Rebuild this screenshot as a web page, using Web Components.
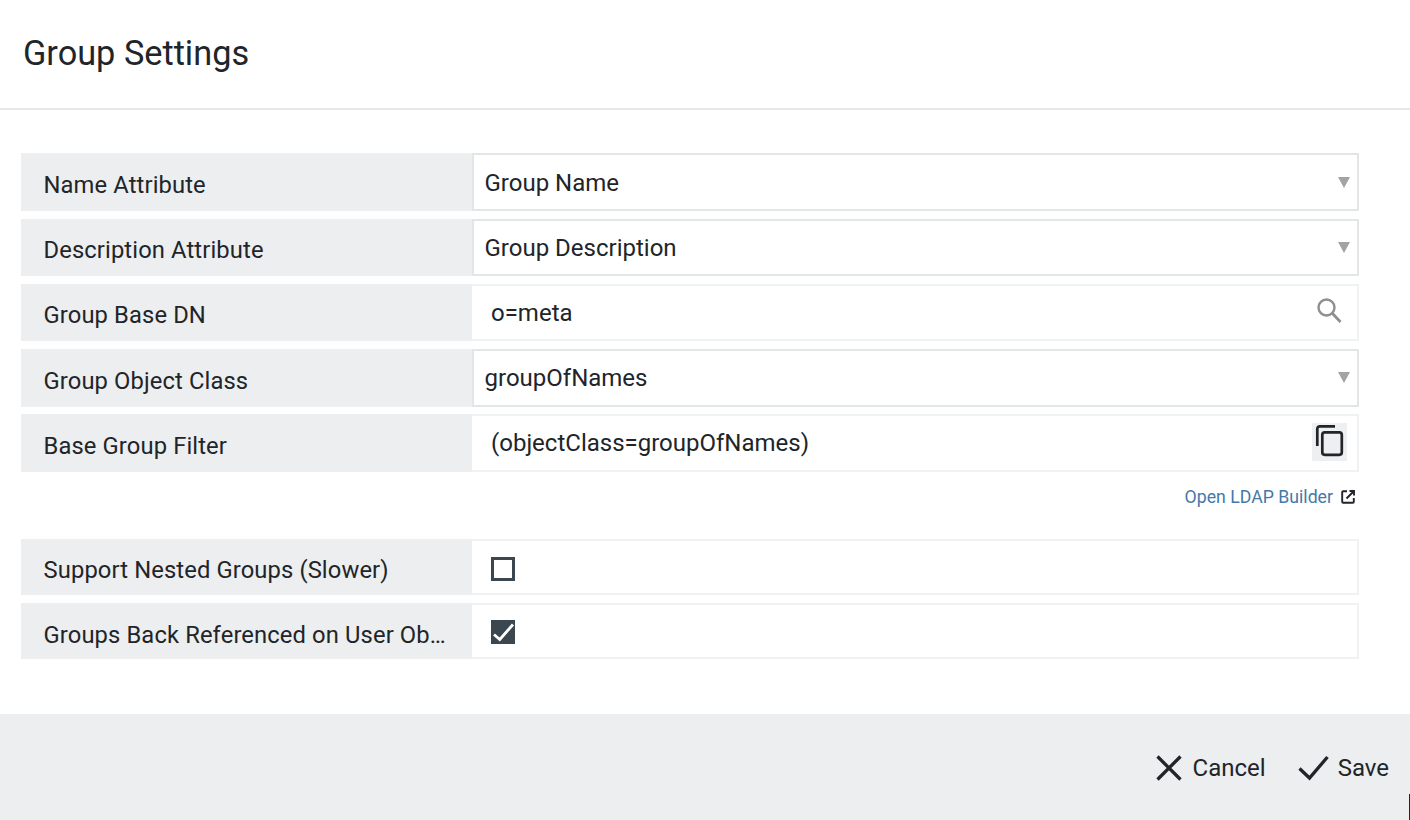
<!DOCTYPE html>
<html><head><meta charset="utf-8"><style>
html,body{margin:0;padding:0;background:#fff}
body{font-family:Roboto,"Liberation Sans",sans-serif;color:#212529;width:1410px;height:820px;overflow:hidden;position:relative}
</style></head><body>
<settings-dialog>
<span slot="title">Group Settings</span>
<form-row label="Name Attribute" kind="select" value="Group Name"></form-row>
<form-row label="Description Attribute" kind="select" value="Group Description"></form-row>
<form-row label="Group Base DN" kind="search" value="o=meta"></form-row>
<form-row label="Group Object Class" kind="select" value="groupOfNames"></form-row>
<form-row label="Base Group Filter" kind="copy" value="(objectClass=groupOfNames)"></form-row>
<ldap-link></ldap-link>
<form-row label="Support Nested Groups (Slower)" kind="check"></form-row>
<form-row label="Groups Back Referenced on User Ob…" kind="check" checked></form-row>
<action-button slot="actions" icon="x">Cancel</action-button>
<action-button slot="actions" icon="check">Save</action-button>
</settings-dialog>
<script>
class SettingsDialog extends HTMLElement{constructor(){super();this.attachShadow({mode:'open'}).innerHTML=`<style>
:host{display:flex;flex-direction:column;height:820px}
header{height:106px;padding-bottom:2px;border-bottom:2px solid #e6e9ea;padding-left:23px;display:flex;align-items:center;font-size:34.3px;color:#212529}
main{flex:1;padding:43.3px 51px 0 21px;display:flex;flex-direction:column;gap:7.75px}
footer{height:106px;background:#eceef0;display:flex;justify-content:flex-end;align-items:center;gap:32px;padding:0 21px 0 0}
</style><header><slot name="title"></slot></header><main><slot></slot></main><footer><slot name="actions"></slot></footer>`}}
customElements.define('settings-dialog',SettingsDialog);

const ICONS={
search:`<svg width="28" height="28" viewBox="0 0 28 28" fill="none" stroke="#8f8f8f"><circle cx="11.500" cy="11.500" r="8" stroke-width="2.400"/><path d="M17.500 17.500l8 8.500" stroke-width="2.800"/></svg>`,
copy:`<svg width="35" height="38" viewBox="0 0 35 38" fill="none" stroke="#212529" stroke-width="2.700"><path d="M5.300 23V5.800a2.500 2.500 0 0 1 2.500-2.500H23"/><rect x="10.300" y="9.300" width="19.500" height="22.500" rx="2.500"/></svg>`
};
class FormRow extends HTMLElement{constructor(){super();this.attachShadow({mode:'open'})}
connectedCallback(){const k=this.getAttribute('kind'),v=this.getAttribute('value')||'',ch=this.hasAttribute('checked');
let inner='';
if(k==='select')inner=`<div class="sel"><span>${v}</span><i class="arrow"></i></div>`;
if(k==='search'||k==='copy')inner=`<div class="inp ${k}"><span>${v}</span>${k==='search'?`<b class="ic s">${ICONS.search}</b>`:`<b class="ic c">${ICONS.copy}</b>`}</div>`;
if(k==='check')inner=`<div class="inp chk"><i class="cb ${ch?'on':''}">${ch?'<svg width="24" height="24" viewBox="0 0 24 24" fill="none" stroke="#fff" stroke-width="2.800"><path d="M3 14.500l5.800 5L22 4.500"/></svg>':''}</i></div>`;
this.shadowRoot.innerHTML=`<style>
:host{display:grid;grid-template-columns:451px 887px;height:57.5px;font-size:24px;color:#212529}
:host([kind=check]){height:56px}
.lab{background:#eceef0;display:flex;align-items:center;padding:5.500px 0 0 22.500px;min-width:0;font-size:23.75px;letter-spacing:.12px}
:host([kind=check]) .lab{padding-top:6px}
:host([checked]) .lab{padding-top:9px}
.lab span{white-space:nowrap;display:block;line-height:30px}
.sel,.inp{box-sizing:border-box;display:flex;align-items:center;justify-content:space-between;height:100%;background:#fff}
.sel{border:2px solid #e3e6e7;padding:1px 7px 0 10.500px}
.inp{border:2px solid #f0f1f2;border-left:0;padding:0 11px 0 19px}
.inp.copy{padding-right:10px}
.inp.chk{padding-top:3px;padding-bottom:0}
.arrow{width:0;height:0;border-left:6.500px solid transparent;border-right:6.500px solid transparent;border-top:11px solid #a3a3a3;margin-bottom:1px}
.ic{display:flex;align-items:center;justify-content:center}
.s{margin:0 3px 5.500px 0}
.c{width:35px;height:38px;background:#eeeff0;margin-bottom:2px}
.cb{box-sizing:border-box;width:24px;height:24px;border:3.500px solid #3a4750;display:block}
.cb.on{background:#3a4750;border:0}
.cb svg{display:block}
</style><div class="lab"><span>${this.getAttribute('label')}</span></div>${inner}`}}
customElements.define('form-row',FormRow);

class LdapLink extends HTMLElement{constructor(){super();this.attachShadow({mode:'open'}).innerHTML=`<style>
:host{display:flex;justify-content:flex-end;align-items:center;gap:8px;width:1338px;height:45px;margin:-7.750px 0 14.700px 0;padding:6px 4px 0 0;box-sizing:border-box;font-size:17.700px;color:#4578a8}
svg{display:block}
</style><span>Open LDAP Builder</span><svg width="14" height="14" viewBox="0 0 14 14" fill="none" stroke="#212529" stroke-width="1.900"><path d="M6 1.200H2.200a1 1 0 0 0-1 1v9.600a1 1 0 0 0 1 1h9.600a1 1 0 0 0 1-1V8"/><path d="M5.500 8.500L12.500 1.500M8.500 1h4.500v4.500"/></svg>`}}
customElements.define('ldap-link',LdapLink);

class ActionButton extends HTMLElement{constructor(){super();const x=this.getAttribute('icon')==='x';
this.attachShadow({mode:'open'}).innerHTML=`<style>
:host{display:flex;align-items:center;gap:${x?10:9}px;font-size:24px;color:#212529;margin-top:1px}
svg{display:block}
</style>${x?'<svg width="28" height="28" viewBox="0 0 28 28" fill="none" stroke="#212529" stroke-width="3.300"><path d="M2.500 2.500l23 23M25.500 2.500l-23 23"/></svg>':'<svg width="31" height="26" viewBox="0 0 31 26" fill="none" stroke="#212529" stroke-width="3.300"><path d="M1.500 13.500l10 9.500L29.500 2"/></svg>'}<span><slot></slot></span>`}}
customElements.define('action-button',ActionButton);

class CursorMark extends HTMLElement{constructor(){super();this.attachShadow({mode:'open'}).innerHTML=`<style>:host{position:absolute;right:0;bottom:0;width:1.500px;height:26px;background:#212529}</style>`}}
customElements.define('cursor-mark',CursorMark);
document.body.appendChild(document.createElement('cursor-mark'));
</script>
</body></html>
